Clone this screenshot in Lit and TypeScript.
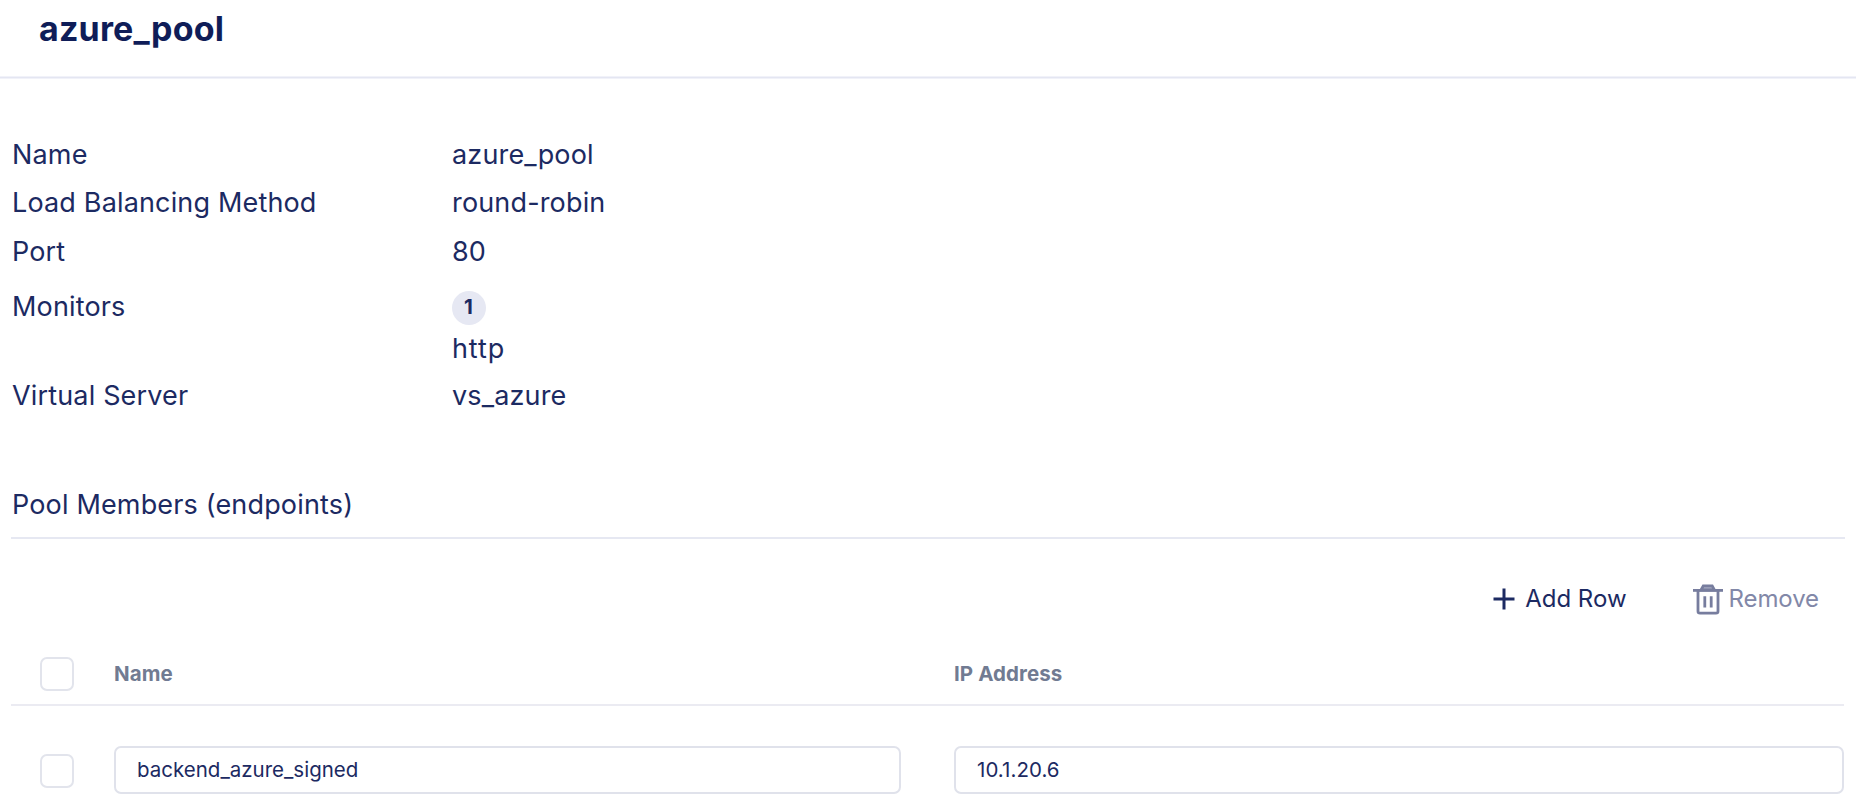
import { LitElement, html, css, svg } from "lit";
import { customElement } from "lit/decorators.js";

const plusIcon = svg`<path d="M11 0.5V21.5M0.5 11H21.5" stroke="currentColor" stroke-width="3" fill="none"/>`;

@customElement("pool-field")
class PoolField extends LitElement {
  static properties = { label: {} };
  label = "";
  static styles = css`
    :host { display: grid; grid-template-columns: 440px 1fr; align-items: start; }
  `;
  render() {
    return html`<span>${this.label}</span><slot></slot>`;
  }
}

@customElement("app-root")
class AppRoot extends LitElement {
  static styles = css`
    :host {
      display: block;
      box-sizing: border-box;
      height: 812px;
      overflow: hidden;
      background: #fff;
      color: #1c2a62;
      font-family: Inter, sans-serif;
    }
    header {
      box-sizing: border-box;
      height: 79px;
      padding-left: 39px;
      border-bottom: 1px solid #f1f2f9;
      box-shadow: inset 0 -1px #e4e6f2, inset 0 -2px #f1f2f9;
    }
    h1 {
      margin: 0;
      font-size: 34px;
      line-height: 57px;
      font-weight: 700;
      letter-spacing: 0.18px;
      color: #0f1d58;
    }
    main { padding: 48px 11px 0; }
    .details {
      padding: 8px 0 0 1px;
      font-size: 27px;
      line-height: 40px;
      letter-spacing: 0.16px;
    }
    .f-name { height: 48px; }
    .f-method { height: 49px; }
    .f-port { height: 55px; }
    .f-mon { height: 89px; }
    .f-vs { height: 40px; }
    .badge {
      display: flex;
      align-items: center;
      justify-content: center;
      width: 34px;
      height: 34px;
      margin-top: 4px;
      border-radius: 50%;
      background: #e6e8f3;
      font-size: 20.5px;
      line-height: 31px;
      letter-spacing: 0;
    }
    .badge b { padding: 0 1px 3px 0; font-weight: 650; }
    .http { display: block; margin-top: 4px; letter-spacing: 0.9px; }
    h2 {
      margin: 69px 0 0;
      padding-left: 1px;
      height: 52px;
      font-size: 27px;
      line-height: 40px;
      font-weight: 400;
      letter-spacing: 0.16px;
      border-bottom: 2px solid #e6e8f2;
    }
    .toolbar {
      display: flex;
      justify-content: flex-end;
      align-items: center;
      height: 34px;
      margin-top: 43px;
      padding-right: 26px;
      font-size: 24px;
      line-height: 34px;
    }
    .btn { display: flex; align-items: center; }
    .plus { width: 22px; height: 22px; margin-right: 10px; }
    .remove { margin-left: 66px; color: #8288a8; letter-spacing: -0.1px; }
    .trash { width: 30px; height: 31px; margin-right: 6px; color: #777d9e; }
    .row {
      display: grid;
      grid-template-columns: 103px 787px 53px 890px;
      align-items: center;
      font-size: 20.5px;
    }
    .head {
      height: 90px;
      margin-right: 1px;
      box-sizing: border-box;
      padding-top: 27px;
      border-bottom: 2px solid #ebebf2;
      font-weight: 650;
      letter-spacing: 0.08px;
      color: #717b92;
    }
    .body { margin-top: 40px; height: 48px; }
    .body .check { margin-top: 1px; }
    .check {
      box-sizing: border-box;
      width: 34px;
      height: 34px;
      margin-left: 28.5px;
      border: 2px solid #e2e4ec;
      border-radius: 7px;
    }
    .input {
      box-sizing: border-box;
      height: 48px;
      padding: 0 21px;
      border: 2px solid #e0e2eb;
      border-radius: 7px;
      line-height: 43px;
    }
    .ip { letter-spacing: 0.05px; }
  `;
  render() {
    return html`
      <header><h1>azure_pool</h1></header>
      <main>
        <section class="details">
          <pool-field class="f-name" label="Name"><span>azure_pool</span></pool-field>
          <pool-field class="f-method" label="Load Balancing Method"><span>round-robin</span></pool-field>
          <pool-field class="f-port" label="Port"><span>80</span></pool-field>
          <pool-field class="f-mon" label="Monitors">
            <div><div class="badge"><b>1</b></div><span class="http">http</span></div>
          </pool-field>
          <pool-field class="f-vs" label="Virtual Server"><span>vs_azure</span></pool-field>
        </section>
        <h2>Pool Members (endpoints)</h2>
        <div class="toolbar">
          <div class="btn"><svg class="plus" viewBox="0 0 22 22">${plusIcon}</svg>Add Row</div>
          <div class="btn remove">
            <svg class="trash" viewBox="0 0 30 31" fill="none" stroke="currentColor" stroke-width="2.8">
              <path d="M0 6.400H30" />
              <path d="M8 6L10.300 1.800H19.200L21.500 6Z" fill="currentColor" fill-opacity="0.65" />
              <path d="M5 6.400V27.300Q5 29.200 7 29.200H23Q25 29.200 25 27.300V6.400" />
              <path d="M11.800 12.300V23.500M18.200 12.300V23.500" />
            </svg>Remove
          </div>
        </div>
        <div class="row head"><div class="check"></div><div>Name</div><div></div><div>IP Address</div></div>
        <div class="row body">
          <div class="check"></div><div class="input">backend_azure_signed</div>
          <div></div><div class="input ip">10.1.20.6</div>
        </div>
      </main>
    `;
  }
}
